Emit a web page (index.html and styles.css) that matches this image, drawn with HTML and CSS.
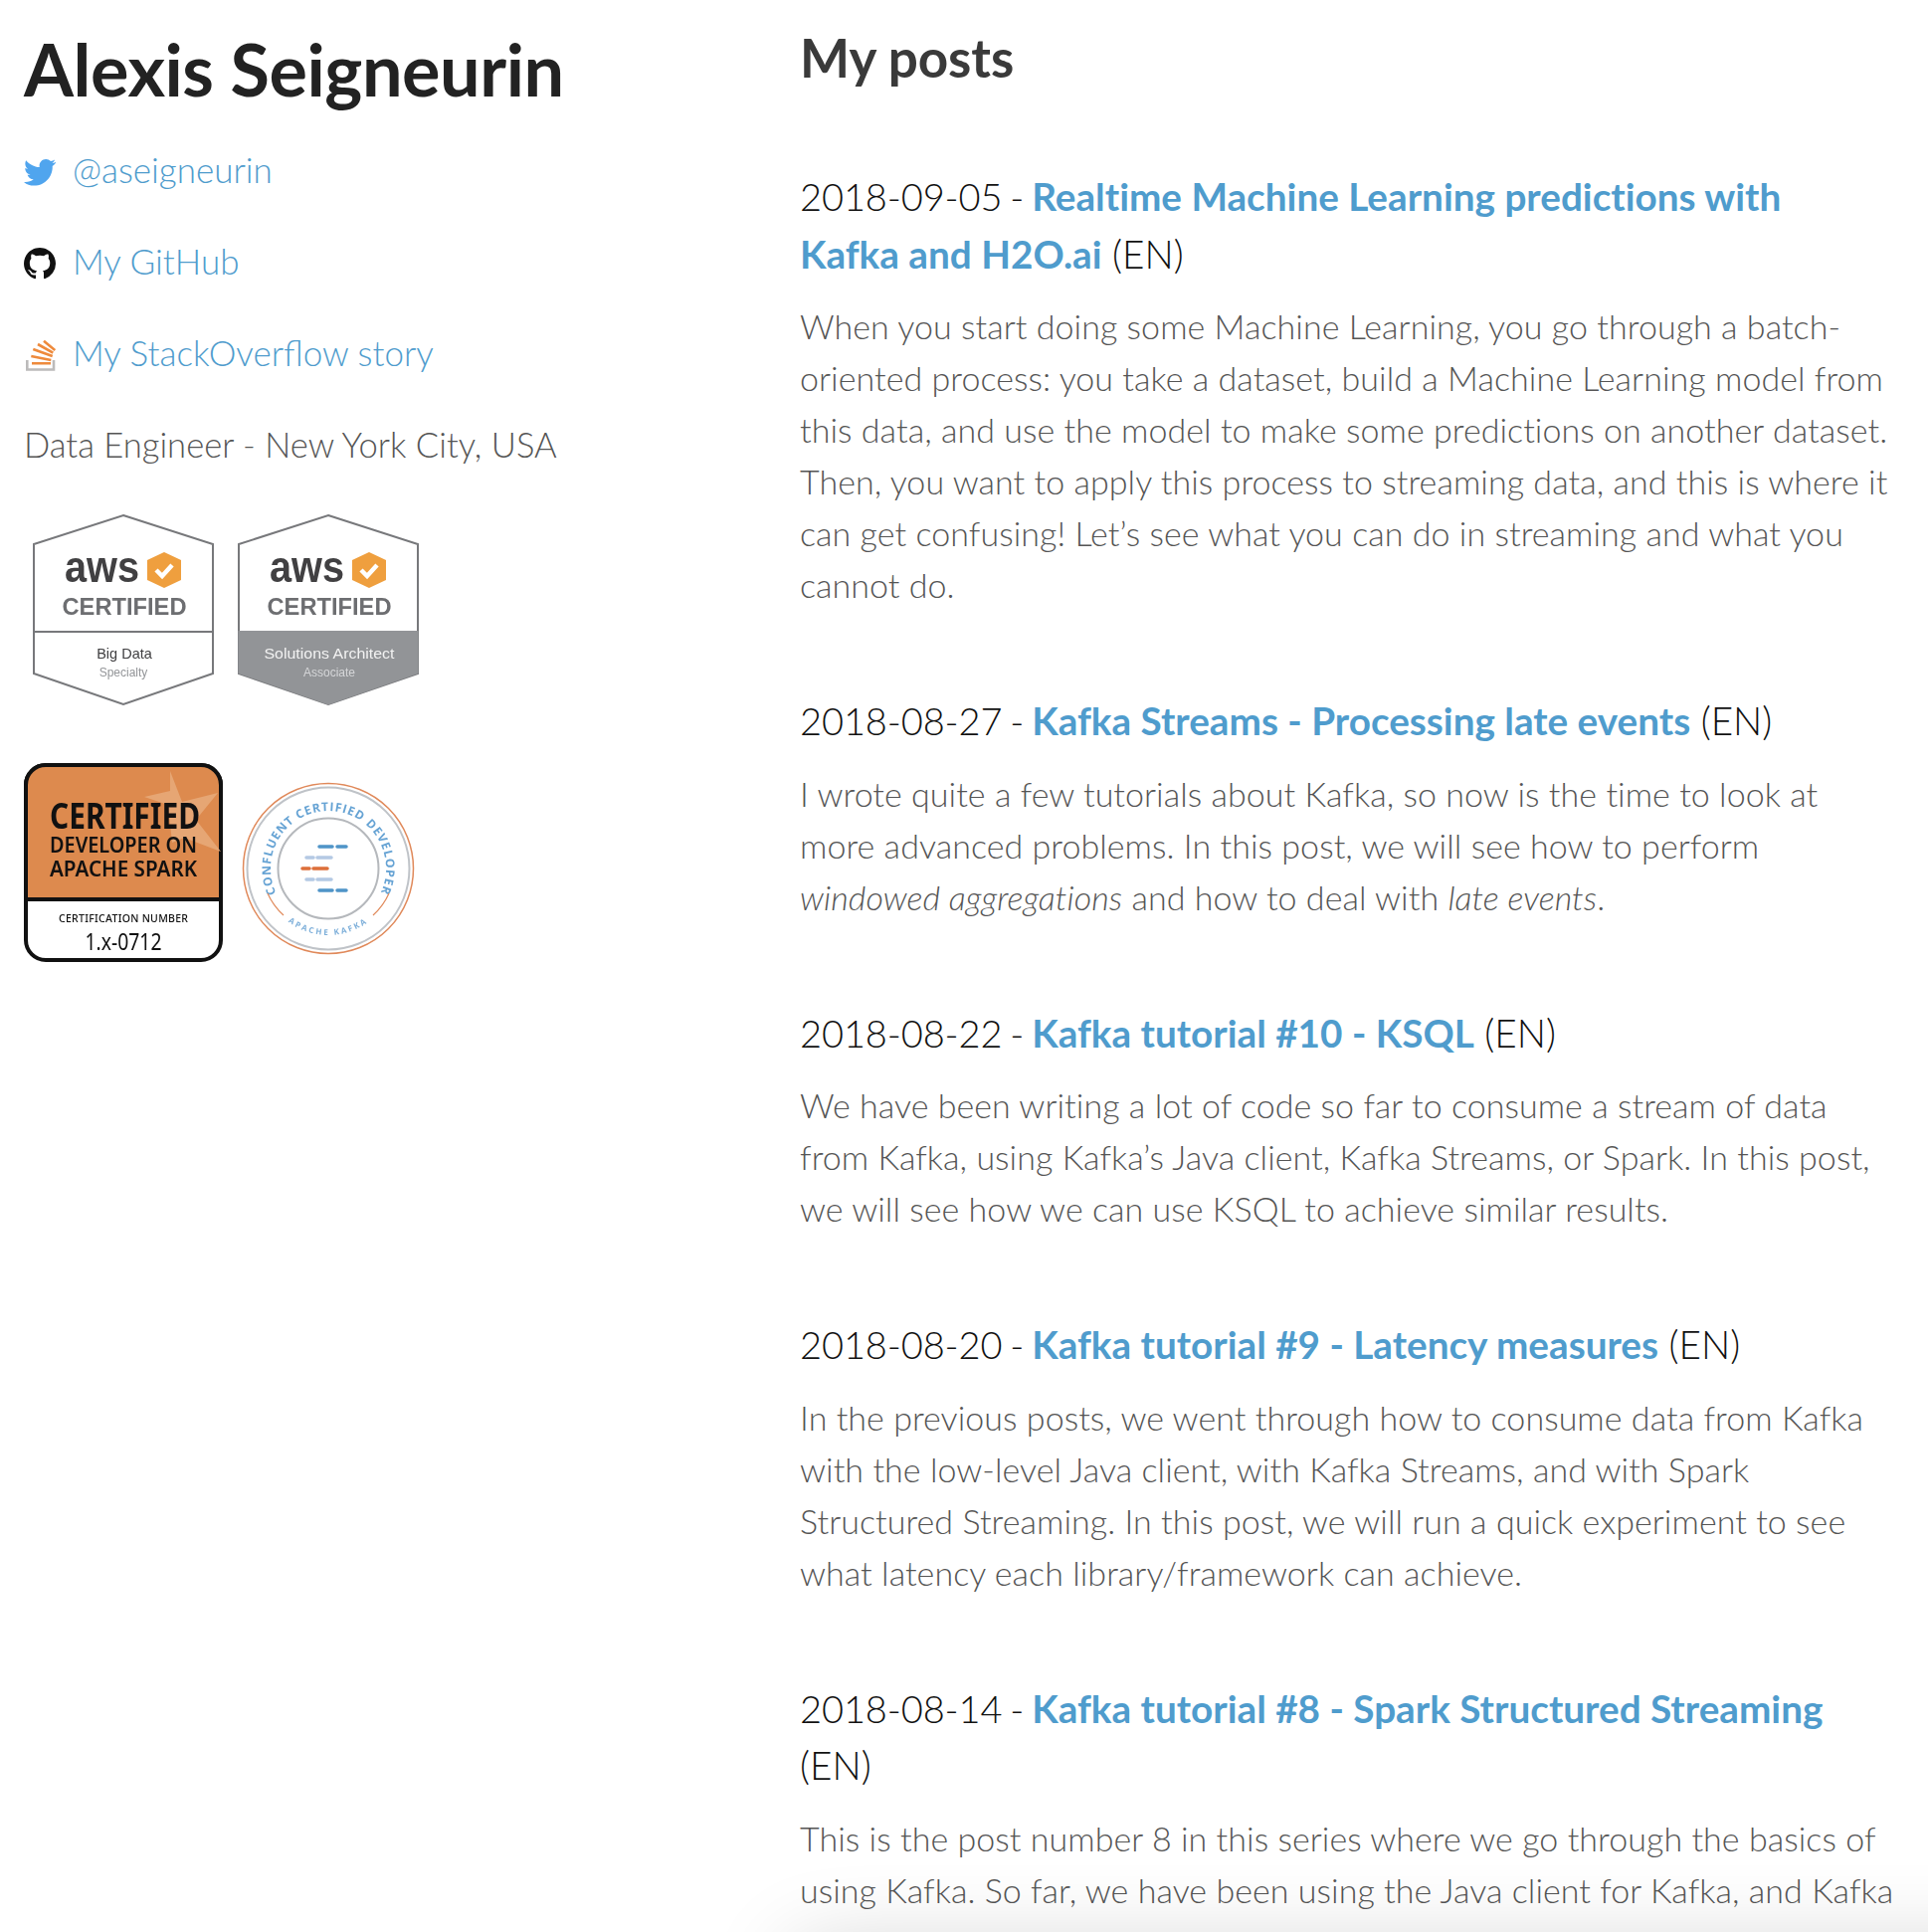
FILE: index.html
```html
<!DOCTYPE html>
<html lang="en">
<head>
<meta charset="utf-8">
<title>Alexis Seigneurin</title>
<link rel="stylesheet" href="styles.css">
</head>
<body>
<div class="page">
  <aside class="side">
    <h1 class="name">Alexis Seigneurin</h1>
    <p class="line"><svg class="ico" viewBox="0 0 24 24" preserveAspectRatio="none"><path fill="#50a5ee" d="M24 4.56c-.88.39-1.83.65-2.83.77 1.02-.61 1.8-1.57 2.17-2.72-.95.56-2.01.97-3.13 1.2C19.31 2.8 18.03 2.2 16.62 2.2c-2.72 0-4.92 2.2-4.92 4.92 0 .39.04.76.13 1.12C7.74 8.04 4.1 6.07 1.67 3.1c-.42.73-.67 1.57-.67 2.47 0 1.71.87 3.21 2.19 4.1-.8-.03-1.56-.25-2.23-.62v.06c0 2.38 1.7 4.37 3.95 4.83-.41.11-.85.17-1.3.17-.32 0-.62-.03-.93-.09.63 1.96 2.45 3.38 4.6 3.42-1.68 1.32-3.81 2.11-6.11 2.11-.4 0-.79-.02-1.17-.07C2.18 21.39 4.77 22.2 7.55 22.2c9.05 0 14-7.5 14-14 0-.21 0-.42-.02-.64.96-.69 1.8-1.56 2.47-2.55z"/></svg><a class="link" href="#">@aseigneurin</a></p>
    <p class="line"><svg class="ico" viewBox="0 0 16 16" preserveAspectRatio="none"><path fill="#111" d="M8 0C3.58 0 0 3.58 0 8c0 3.54 2.29 6.53 5.47 7.59.4.07.55-.17.55-.38 0-.19-.01-.82-.01-1.49-2.01.37-2.53-.49-2.69-.94-.09-.23-.48-.94-.82-1.13-.28-.15-.68-.52-.01-.53.63-.01 1.08.58 1.23.82.72 1.21 1.87.87 2.33.66.07-.52.28-.87.51-1.07-1.78-.2-3.64-.89-3.64-3.95 0-.87.31-1.59.82-2.15-.08-.2-.36-1.02.08-2.12 0 0 .67-.21 2.2.82.64-.18 1.32-.27 2-.27s1.36.09 2 .27c1.53-1.04 2.2-.82 2.2-.82.44 1.1.16 1.92.08 2.12.51.56.82 1.27.82 2.15 0 3.07-1.87 3.75-3.65 3.95.29.25.54.73.54 1.48 0 1.07-.01 1.93-.01 2.2 0 .21.15.46.55.38A8.01 8.01 0 0 0 16 8c0-4.42-3.58-8-8-8z"/></svg><a class="link" href="#">My GitHub</a></p>
    <p class="line"><svg class="ico" viewBox="0 0 32 32" preserveAspectRatio="none"><path fill="none" stroke="#bcbbbb" stroke-width="2.600" d="M3.300 21V30.500H30V21"/><path fill="none" stroke="#ee8a3c" stroke-width="2.600" d="M8 24.300H27M7.300 17L27.300 21M9.300 10L28.700 17M14 5L29.300 13.700M20 1.700L31.300 11"/></svg><a class="link" href="#">My StackOverflow story</a></p>
    <p class="line role">Data Engineer - New York City, USA</p>
    <div class="badges">
      <svg class="badge" viewBox="0 0 200 200">
        <path d="M100 6 190 35V165L100 196 10 165V35Z" fill="#fff" stroke="#77787b" stroke-width="2"/>
        <path d="M10 123H190" stroke="#77787b" stroke-width="2"/>
        <text class="aws" x="41" y="72.500" textLength="75" lengthAdjust="spacingAndGlyphs">aws</text>
        <path d="M141 43 158 51V71L141 79 124 71V51Z" fill="#ef9f3e"/>
        <path d="M133 61l6 6 10-11" fill="none" stroke="#fff" stroke-width="4.500"/>
        <text class="cert" x="101" y="106" textLength="125" lengthAdjust="spacingAndGlyphs">CERTIFIED</text>
        <text class="lvl dark" x="101" y="150">Big Data</text>
        <text class="sub" x="100" y="168">Specialty</text>
      </svg>
      <svg class="badge" viewBox="0 0 200 200">
        <path d="M100 6 190 35V165L100 196 10 165V35Z" fill="#fff" stroke="#77787b" stroke-width="2"/>
        <path d="M9.500 122H190.500V165L100 196.500 9.500 165Z" fill="#929497"/>
        <text class="aws" x="41" y="72.500" textLength="75" lengthAdjust="spacingAndGlyphs">aws</text>
        <path d="M141 43 158 51V71L141 79 124 71V51Z" fill="#ef9f3e"/>
        <path d="M133 61l6 6 10-11" fill="none" stroke="#fff" stroke-width="4.500"/>
        <text class="cert" x="101" y="106" textLength="125" lengthAdjust="spacingAndGlyphs">CERTIFIED</text>
        <text class="lvl light" x="101" y="150" textLength="131" lengthAdjust="spacingAndGlyphs">Solutions Architect</text>
        <text class="sub subl" x="101" y="168">Associate</text>
      </svg>
      <svg class="badge" viewBox="0 0 200 200">
        <defs><clipPath id="sp"><path d="M2 137V22A20 20 0 0 1 22 2H178A20 20 0 0 1 198 22V137Z"/></clipPath></defs>
        <rect x="2" y="2" width="196" height="196" rx="20" fill="#fff" stroke="#111" stroke-width="4"/>
        <path d="M2 137V22A20 20 0 0 1 22 2H178A20 20 0 0 1 198 22V137Z" fill="#dd8a4e" stroke="#111" stroke-width="4"/>
        <path clip-path="url(#sp)" d="M147 8l12 31 36-9-22 27 25 32-37-14-12 5-4-38-24-8 26-6z" fill="#e6a674"/>
        <text class="s1" x="26" y="66" textLength="151" lengthAdjust="spacingAndGlyphs">CERTIFIED</text>
        <text class="s2" x="26" y="90" textLength="148" lengthAdjust="spacingAndGlyphs">DEVELOPER ON</text>
        <text class="s2" x="26" y="114" textLength="148" lengthAdjust="spacingAndGlyphs">APACHE SPARK</text>
        <text class="s3" x="100" y="160" textLength="130">CERTIFICATION NUMBER</text>
        <text class="s4" x="100" y="188" textLength="77" lengthAdjust="spacingAndGlyphs">1.x-0712</text>
      </svg>
      <svg class="badge" viewBox="0 0 200 200">
        <defs>
          <path id="ctop" d="M100 164A58 58 0 1 1 100.100 164"/>
          <path id="cbot" d="M33 106A67 67 0 0 0 167 106"/>
        </defs>
        <circle cx="100" cy="106" r="85.500" fill="none" stroke="#e0895a" stroke-width="1.500"/>
        <circle cx="100" cy="106" r="81.500" fill="none" stroke="#bfc3c8" stroke-width="2"/>
        <circle cx="100" cy="106" r="50.500" fill="none" stroke="#b5b8bc" stroke-width="2"/>
        <text class="ring"><textPath href="#ctop" startOffset="50%" text-anchor="middle">CONFLUENT CERTIFIED DEVELOPER</textPath></text>
        <text class="ringb"><textPath href="#cbot" startOffset="50%" text-anchor="middle">APACHE KAFKA</textPath></text>
        <path d="M39 131A66 66 0 0 0 55 153M145 153A66 66 0 0 0 161 131" fill="none" stroke="#e0895a" stroke-width="1.200"/>
        <path d="M91 84H104M109 84H118M91 128H104M109 128H118" stroke="#4f94c8" stroke-width="3.500" stroke-linecap="round"/>
        <path d="M78 95H85M89 95H103M78 117H85M89 117H103" stroke="#b4c9e4" stroke-width="3.500" stroke-linecap="round"/>
        <path d="M74 106H81M85 106H99" stroke="#dd6f3a" stroke-width="3.500" stroke-linecap="round"/>
      </svg>
    </div>
  </aside>
  <main class="posts">
    <h2 class="head">My posts</h2>
    <article class="post">
      <h3 class="title"><span class="date">2018-09-05 - </span><a href="#">Realtime Machine Learning predictions with Kafka and H2O.ai</a> (EN)</h3>
      <p class="text">When you start doing some Machine Learning, you go through a batch-oriented process: you take a dataset, build a Machine Learning model from this data, and use the model to make some predictions on another dataset. Then, you want to apply this process to streaming data, and this is where it can get confusing! Let’s see what you can do in streaming and what you cannot do.</p>
    </article>
    <article class="post">
      <h3 class="title"><span class="date">2018-08-27 - </span><a href="#">Kafka Streams - Processing late events</a> (EN)</h3>
      <p class="text">I wrote quite a few tutorials about Kafka, so now is the time to look at more advanced problems. In this post, we will see how to perform <em>windowed aggregations</em> and how to deal with <em>late events</em>.</p>
    </article>
    <article class="post">
      <h3 class="title"><span class="date">2018-08-22 - </span><a href="#">Kafka tutorial #10 - KSQL</a> (EN)</h3>
      <p class="text">We have been writing a lot of code so far to consume a stream of data from Kafka, using Kafka’s Java client, Kafka Streams, or Spark. In this post, we will see how we can use KSQL to achieve similar results.</p>
    </article>
    <article class="post">
      <h3 class="title"><span class="date">2018-08-20 - </span><a href="#">Kafka tutorial #9 - Latency measures</a> (EN)</h3>
      <p class="text">In the previous posts, we went through how to consume data from Kafka with the low-level Java client, with Kafka Streams, and with Spark Structured Streaming. In this post, we will run a quick experiment to see what latency each library/framework can achieve.</p>
    </article>
    <article class="post">
      <h3 class="title"><span class="date">2018-08-14 - </span><a href="#">Kafka tutorial #8 - Spark Structured Streaming</a> (EN)</h3>
      <p class="text">This is the post number 8 in this series where we go through the basics of using Kafka. So far, we have been using the Java client for Kafka, and Kafka</p>
    </article>
  </main>
</div>
<div class="fade"></div>
</body>
</html>
```
FILE: styles.css
```css
html, body { margin: 0; height: 1942px; overflow: hidden; background: #fff; }
body { font-family: Lato, sans-serif; font-weight: 300; font-size: 34px; line-height: 52px; color: #555; position: relative; font-variant-ligatures: none; }
a { color: #4f9ccd; text-decoration: none; }
.page { display: grid; grid-template-columns: 780px 1103px; padding: 0 24px; }
.name { margin: 34px 0 40px; font-size: 72px; line-height: 70px; letter-spacing: -0.45px; font-weight: 700; color: #222; }
.line { margin: 0 0 40px; display: flex; align-items: center; gap: 17px; height: 52px; font-size: 35px; }
.link { font-variant-ligatures: common-ligatures; }
.role { font-size: 34.600px; position: relative; top: 1px; }
.ico { width: 32px; height: 32px; flex: none; margin-top: 6px; }
.badges { display: grid; grid-template-columns: 200px 200px; gap: 55px 6px; }
.badge { width: 200px; height: 200px; display: block; filter: blur(.4px); }
.aws { font: 700 45px "Liberation Sans", sans-serif; fill: #414042; }
.cert { font: 700 24px "Liberation Sans", sans-serif; fill: #6d6e71; text-anchor: middle; }
.lvl { font: 400 14.500px "Liberation Sans", sans-serif; text-anchor: middle; }
.dark { fill: #414042; }
.light { fill: #f2f2f2; }
.sub { font: 400 12px "Liberation Sans", sans-serif; fill: #939598; text-anchor: middle; }
.subl { fill: #d5d6d8; }
.s1 { font: 700 35px "Noto Sans", sans-serif; fill: #111; }
.s2 { font: 600 21px "Noto Sans", sans-serif; fill: #111; }
.s3 { font: 500 10.500px "Noto Sans", sans-serif; fill: #111; text-anchor: middle; }
.s4 { font: 400 24px "Noto Sans", sans-serif; fill: #111; text-anchor: middle; }
.ring { font: 700 12px "Open Sans", sans-serif; letter-spacing: 0.900px; fill: #66a3d4; }
.ringb { font: 700 8px "Open Sans", sans-serif; letter-spacing: 2.200px; fill: #7fb0da; }
.head { margin: 25px 0 78px; font-size: 53px; line-height: 66px; letter-spacing: -0.1px; font-weight: 700; color: #3a3a3a; }
.post { margin-bottom: 82px; }
.title { margin: 0 0 18px; max-width: 1085px; font-size: 38.700px; line-height: 57.500px; font-weight: 300; color: #111; }
.title a { font-weight: 700; }
.date { font-size: 38px; letter-spacing: -0.1px; word-spacing: -2.300px; }
.text { margin: 0; letter-spacing: 0.05px; }
.fade { position: absolute; left: 600px; right: 0; bottom: 0; height: 160px; overflow: hidden; }
.fade::before { content: ""; position: absolute; left: 200px; right: -300px; top: 180px; height: 100px; box-shadow: 0 0 90px rgba(0, 0, 0, .2); }
```
